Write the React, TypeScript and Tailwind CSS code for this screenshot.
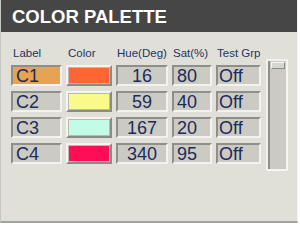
import React from 'react';

interface PaletteRow {
  label: string;
  labelBg: string;
  swatch: string;
  hue: number;
  sat: number;
  test: string;
}

const rows: PaletteRow[] = [
  { label: 'C1', labelBg: 'bg-[#e6a352]', swatch: 'bg-[#ff6633]', hue: 16, sat: 80, test: 'Off' },
  { label: 'C2', labelBg: 'bg-[#cbcbc4]', swatch: 'bg-[#f9f98c]', hue: 59, sat: 40, test: 'Off' },
  { label: 'C3', labelBg: 'bg-[#cbcbc4]', swatch: 'bg-[#c2fbe6]', hue: 167, sat: 20, test: 'Off' },
  { label: 'C4', labelBg: 'bg-[#cbcbc4]', swatch: 'bg-[#ff0d55]', hue: 340, sat: 95, test: 'Off' },
];

const sunken =
  'h-[21px] border-2 border-t-[#8e8e8a] border-l-[#8e8e8a] border-b-[#f2f2ee] border-r-[#f2f2ee] text-[18px] leading-[18px] text-[#1c2a5c] whitespace-nowrap overflow-hidden';

const App = () => {
  return (
    <div className="w-[300px] h-[240px] bg-white" style={{ fontFamily: '"Liberation Sans", Arial, sans-serif' }}>
      <div className="w-[298px] h-[223px] bg-[#e0e0d8] border-l border-r border-b-2 border-l-[#c8c8c2] border-r-[#f4f4f0] border-b-[#a3a39d] flex flex-col">
        <div className="h-[32px] bg-[#464646] flex items-center pl-[11px] pt-[3px]">
          <h1 className="text-white font-bold text-[18.5px] leading-none">COLOR PALETTE</h1>
        </div>

        <div className="flex pl-[10px]">
          <div className="flex flex-col pt-[14px]">
            <div className="flex h-[14px] text-[11.5px] leading-[14px] text-[#24335f] mb-[5px] whitespace-nowrap">
              <span className="w-[55px] pl-[2px]">Label</span>
              <span className="w-[50px] pl-[2px]">Color</span>
              <span className="w-[55px] pl-[1px]">Hue(Deg)</span>
              <span className="w-[44px] pl-[2px]">Sat(%)</span>
              <span className="w-[45px] pl-[2px]">Test Grp</span>
            </div>

            <div className="flex flex-col gap-[5px]">
              {rows.map((row) => (
                <div key={row.label} className="flex">
                  <div className={`${sunken} ${row.labelBg} w-[51px] pl-[3px]`}>{row.label}</div>
                  <div className="ml-[4px] w-[46px] h-[21px] border-2 border-t-[#f4f4f0] border-l-[#f4f4f0] border-b-[#8a8a86] border-r-[#8a8a86] bg-[#b9b9b3] p-[1px]">
                    <div className={`w-full h-full ${row.swatch}`} />
                  </div>
                  <div className={`${sunken} bg-[#cbcbc4] ml-[4px] w-[52px] text-center`}>{row.hue}</div>
                  <div className={`${sunken} bg-[#cbcbc4] ml-[4px] w-[40px] pl-[3px]`}>{row.sat}</div>
                  <div className={`${sunken} bg-[#cbcbc4] ml-[4px] w-[45px] pl-[1px]`}>{row.test}</div>
                </div>
              ))}
            </div>
          </div>

          <div className="ml-[5px] mt-[27px] w-[22px] h-[112px] border-2 border-t-[#f0f0ec] border-l-[#f0f0ec] border-b-[#f4f4f0] border-r-[#f4f4f0] bg-[#cbcbc4] flex flex-col">
            <div className="h-full border-l-2 border-l-[#8e8e8a] px-[1px] pt-[1px]">
              <div className="h-[7px] border border-t-[#f6f6f2] border-l-[#f6f6f2] border-b-[#8a8a86] border-r-[#8a8a86] bg-[#d6d6d0]" />
            </div>
          </div>
        </div>
      </div>
    </div>
  );
};

export default App;
